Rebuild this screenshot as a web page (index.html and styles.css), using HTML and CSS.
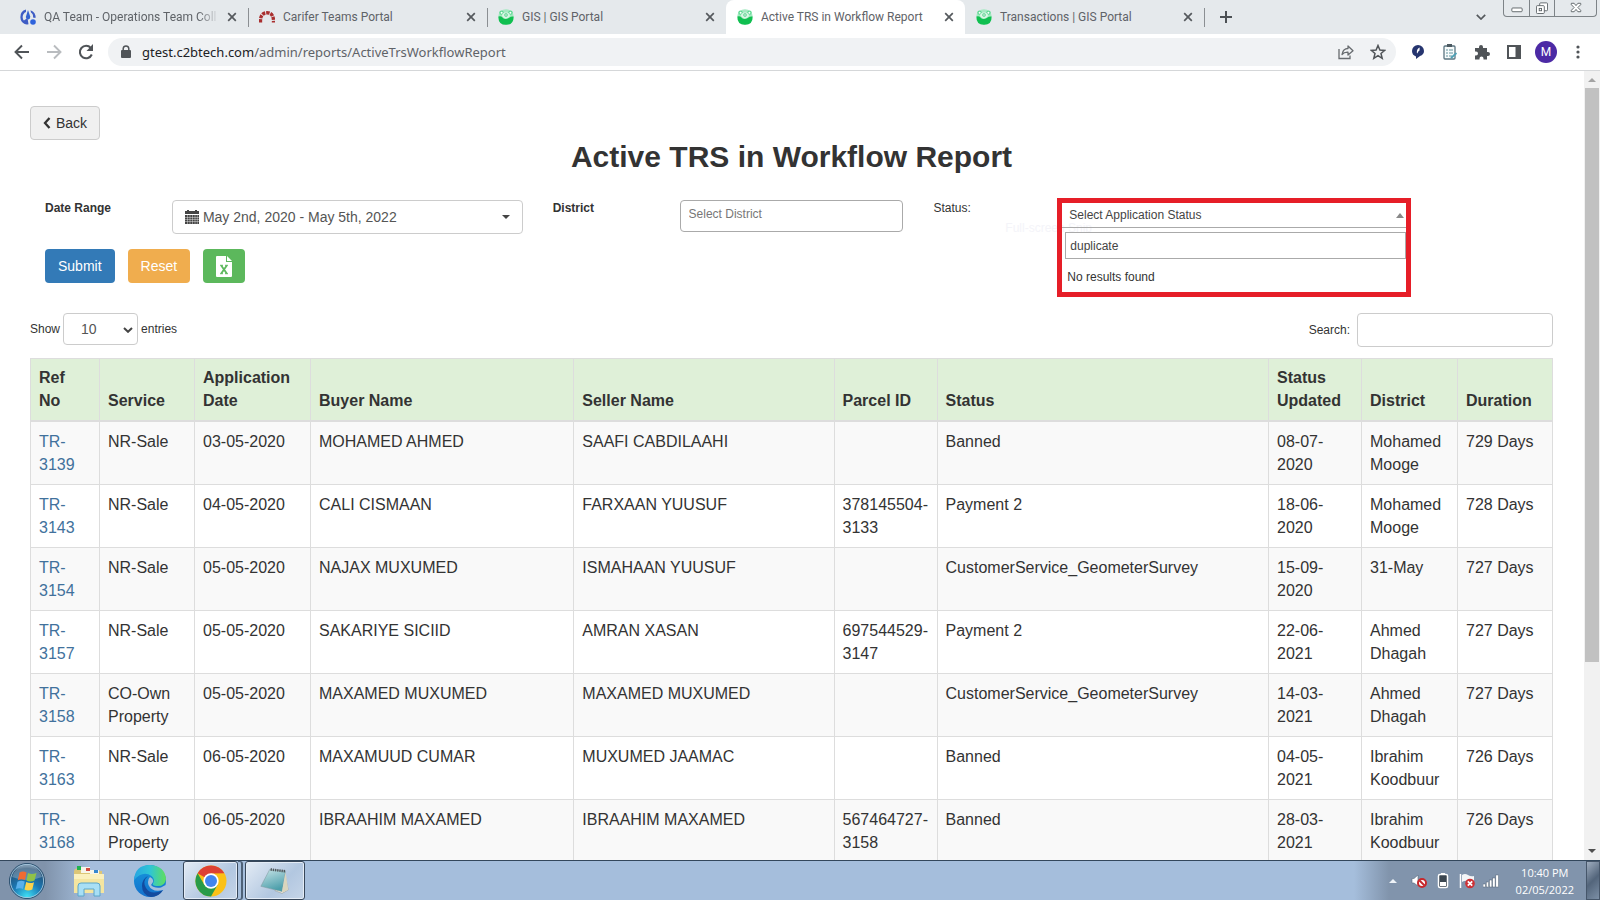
FILE: index.html
```html
<!DOCTYPE html>
<html lang="en">
<head>
<meta charset="utf-8">
<title>Active TRS in Workflow Report</title>
<link rel="stylesheet" href="styles.css">
</head>
<body>
<svg width="0" height="0" class="defs" aria-hidden="true">
  <defs>
    <symbol id="gis" viewBox="0 0 16 16">
      <circle cx="8" cy="8" r="7.800" fill="#a5e9c2"/>
      <circle cx="3.500" cy="3.600" r="2.200" fill="#5ed993"/><circle cx="12.500" cy="3.600" r="2.200" fill="#5ed993"/>
      <circle cx="3.600" cy="3.800" r="1" fill="#fff"/><circle cx="12.400" cy="3.800" r="1" fill="#fff"/>
      <path d="M4 7Q4 3.500 8 3.500T12 7Q10 9.500 8 9.500T4 7Z" fill="#d9f6e5"/>
      <circle cx="8" cy="6" r="1.700" fill="#46cd80"/><circle cx="8" cy="6" r=".8" fill="#fff"/>
      <path d="M.5 7.500Q3 6.800 4.500 8.500T8 10T11.500 8.500T15.500 7.500Q16 15.800 8 15.800T.5 7.500Z" fill="#10bf50"/>
    </symbol>
    <symbol id="x" viewBox="0 0 10 10"><path d="M1.200 1.200 8.800 8.800M8.800 1.200 1.200 8.800" stroke="#55595d" stroke-width="1.700"/></symbol>
  </defs>
</svg>

<header class="browser">
  <nav class="tabs" aria-label="Tabs">
    <div class="tab">
      <svg class="fav" viewBox="0 0 16 16"><path d="M6 .6A7.600 7.600 0 0 0 6.500 15.400L5.500 13A5.600 5.600 0 0 1 6 3Z" fill="#3e5cc4"/><path d="M2.500 12.500 7.500 9 8.500 15.300Q5 16 2.500 12.500Z" fill="#3e5cc4"/><path d="M8 1 5.800 8Q6 10.500 8.300 10.400Q10.600 10 10.200 7.500Z" fill="#3563d0"/><path d="M10.500 1.200Q16 3.500 15.500 9L13 8.500Q13.500 5 11 3.500Z" fill="#3e5cc4"/><circle cx="13" cy="13" r="2.800" fill="#2f63dc"/></svg>
      <span class="tab-title fade">QA Team - Operations Team Coll</span>
      <button class="close" aria-label="Close tab"><svg><use href="#x"/></svg></button>
    </div>
    <div class="tab line">
      <svg class="fav" viewBox="0 0 16 16"><path d="M1.500 13.500Q1 3.800 8 3.800Q15 3.800 14.500 13.500" fill="none" stroke="#a92f2f" stroke-width="3.400" stroke-dasharray="3.300 .9"/></svg>
      <span class="tab-title">Carifer Teams Portal</span>
      <button class="close" aria-label="Close tab"><svg><use href="#x"/></svg></button>
    </div>
    <div class="tab line">
      <svg class="fav"><use href="#gis"/></svg>
      <span class="tab-title">GIS | GIS Portal</span>
      <button class="close" aria-label="Close tab"><svg><use href="#x"/></svg></button>
    </div>
    <div class="tab active">
      <svg class="fav"><use href="#gis"/></svg>
      <span class="tab-title">Active TRS in Workflow Report</span>
      <button class="close" aria-label="Close tab"><svg><use href="#x"/></svg></button>
    </div>
    <div class="tab">
      <svg class="fav"><use href="#gis"/></svg>
      <span class="tab-title">Transactions | GIS Portal</span>
      <button class="close" aria-label="Close tab"><svg><use href="#x"/></svg></button>
    </div>
    <button class="new-tab line" aria-label="New tab"><svg viewBox="0 0 12 12"><path d="M6 0V12M0 6H12" stroke="#4c5054" stroke-width="2"/></svg></button>
    <button class="tab-search" aria-label="Search tabs"><svg viewBox="0 0 10 6"><path d="M.8.8 5 5 9.200.8" fill="none" stroke="#55595d" stroke-width="1.700"/></svg></button>
    <div class="window">
      <button aria-label="Minimise"><svg viewBox="0 0 12 16"><rect x=".5" y="8.500" width="11" height="4" rx="1" fill="#fff" stroke="#5d6468"/></svg></button>
      <button aria-label="Restore"><svg viewBox="0 0 13 16"><rect x="4" y="3" width="8.500" height="8.500" rx="1" fill="#fff" stroke="#5d6468"/><rect x=".5" y="6" width="8.500" height="8.500" rx="1" fill="#fff" stroke="#5d6468"/><rect x="3.500" y="9" width="2.500" height="2.500" fill="#fff" stroke="#5d6468"/></svg></button>
      <button class="wide" aria-label="Close"><svg viewBox="0 0 12 16"><path d="M1 3.500H4L6 6 8 3.500H11V5L8 8 11 11V12.500H8L6 10 4 12.500H1V11L4 8 1 5Z" fill="#fff" stroke="#5d6468"/></svg></button>
    </div>
  </nav>
  <div class="toolbar">
    <button class="ico" aria-label="Back"><svg viewBox="0 0 16 16"><path d="M15 8H2M8 1.500 1.500 8 8 14.500" fill="none" stroke="#505458" stroke-width="1.900"/></svg></button>
    <button class="ico" aria-label="Forward"><svg viewBox="0 0 16 16"><path d="M1 8H14M8 1.500 14.500 8 8 14.500" fill="none" stroke="#b9bcbf" stroke-width="1.900"/></svg></button>
    <button class="ico" aria-label="Reload"><svg viewBox="0 0 16 16"><path d="M13.800 10.500A6.200 6.200 0 1 1 12.800 4" fill="none" stroke="#505458" stroke-width="2"/><path d="M15 0V7H8.500Z" fill="#505458"/></svg></button>
    <div class="omnibox">
      <svg class="lock" viewBox="0 0 10 14"><rect x="0" y="5" width="10" height="8" rx="1" fill="#505458"/><path d="M2.200 6V3.500Q2.500 1 5 1T7.800 3.500V6" fill="none" stroke="#505458" stroke-width="1.500"/></svg>
      <a class="url" href="#top"><b>gtest.c2btech.com</b>/admin/reports/ActiveTrsWorkflowReport</a>
      <button class="ico" aria-label="Share"><svg viewBox="0 0 16 16"><path d="M1 5V14.500H12V11.500" fill="none" stroke="#676b6f" stroke-width="1.300"/><path d="M4 10.500Q5 4.500 10 4.500V2L15 6.800 10 11V8.200Q6 8 4 10.500Z" fill="none" stroke="#676b6f" stroke-width="1.300" stroke-linejoin="round"/></svg></button>
      <button class="ico" aria-label="Bookmark"><svg viewBox="0 0 16 16"><path d="M8 1.500 9.900 6 14.700 6.400 11 9.500 12.200 14.300 8 11.700 3.800 14.300 5 9.500 1.300 6.400 6.100 6Z" fill="none" stroke="#505458" stroke-width="1.500"/></svg></button>
    </div>
    <div class="extensions">
      <button class="ico" aria-label="Extension"><svg viewBox="0 0 16 16"><path d="M8 1A6 6 0 0 0 2 7Q2 11 6 12.500V15L10 12Q14 10.500 14 7A6 6 0 0 0 8 1Z" fill="#26356f"/><path d="M9.700 3.500Q6.800 4.500 6.800 8.500L7.300 9.500 8.300 7.500 9.500 6.500Z" fill="#fff"/></svg></button>
      <button class="ico" aria-label="Notes"><svg viewBox="0 0 16 16"><rect x="2" y="2" width="11" height="13" rx="1" fill="#f7fbfb" stroke="#5b7480" stroke-width="1.300"/><rect x="5" y="0" width="5" height="3" fill="#4c5a61"/><path d="M4 6H6M7 6H11M4 9H6M7 9H11M4 12H6M7 12H10" stroke="#62939f"/><path d="M9 14 14.500 9" stroke="#4fa0b5" stroke-width="1.800"/></svg></button>
      <button class="ico" aria-label="Extensions"><svg viewBox="0 0 16 16"><path d="M1 4H5V3A2 2 0 0 1 9 3V4H13V8H14A2 2 0 0 1 14 12H13V15.500H9.500V14.500A2 2 0 0 0 5.500 14.500V15.500H1V11.500H2A2 2 0 0 0 2 7.500H1Z" fill="#505458"/></svg></button>
      <button class="ico" aria-label="Side panel"><svg viewBox="0 0 16 16"><path d="M1 1H15V15H1ZM3 3V13H9.500V3Z" fill="#505458" fill-rule="evenodd"/></svg></button>
      <button class="avatar" aria-label="Profile">M</button>
      <button class="ico" aria-label="Menu"><svg viewBox="0 0 16 16"><g fill="#505458"><circle cx="8" cy="3" r="1.600"/><circle cx="8" cy="8" r="1.600"/><circle cx="8" cy="13" r="1.600"/></g></svg></button>
    </div>
  </div>
</header>

<div class="viewport" id="top">
  <main class="page">
    <button class="btn btn-back"><svg viewBox="0 0 8 12"><path d="M6.500 1 2 6 6.500 11" fill="none" stroke="#333" stroke-width="2.300"/></svg>Back</button>
    <h1>Active TRS in Workflow Report</h1>

    <form class="filters">
      <label class="strong" for="range">Date Range</label>
      <div class="span3">
        <button type="button" id="range" class="range"><svg class="cal" viewBox="0 0 14 14"><path d="M0 1H2V0H4V1H10V0H12V1H14V4H0Z" fill="#444"/><rect y="5" width="14" height="9" fill="#444"/><path d="M0 7.500H14M0 9.500H14M0 11.500H14M2.500 5V14M5 5V14M7.500 5V14M10 5V14M12.300 5V14" stroke="#fff" stroke-width=".4"/></svg><span>May 2nd, 2020 - May 5th, 2022</span><i class="caret"></i></button>
      </div>
      <label class="strong" for="district">District</label>
      <div class="span2"><input id="district" class="district" placeholder="Select District"></div>
      <label for="status">Status:</label>
      <div class="span3 status-cell">
        <div class="status">
          <button type="button" id="status" aria-expanded="true">Select Application Status<i class="caret up"></i></button>
          <input aria-label="Filter statuses" value="duplicate">
          <p>No results found</p>
        </div>
        <span class="ghost">Full-screen Snip</span>
      </div>
      <div class="actions">
        <button type="button" class="btn submit">Submit</button>
        <button type="button" class="btn reset">Reset</button>
        <button type="button" class="btn excel" aria-label="Export to Excel"><svg viewBox="0 0 16 21"><path d="M0 1Q0 0 1 0H10V6H16V20Q16 21 15 21H1Q0 21 0 20Z" fill="#fff"/><path d="M11 0 16 5H11Z" fill="#fff"/><path d="M5.200 9.500 10.800 17.500M10.800 9.500 5.200 17.500" stroke="#5cb85c" stroke-width="1.800"/><path d="M4 9.300H7M9 9.300H12M4 17.700H7M9 17.700H12" stroke="#5cb85c" stroke-width="1"/></svg></button>
      </div>
    </form>

    <div class="table-tools">
      <label class="length">Show
        <span class="pick"><select><option>10</option><option>25</option></select><svg viewBox="0 0 10 6"><path d="M1 1 5 4.800 9 1" fill="none" stroke="#444" stroke-width="2"/></svg></span>
        entries</label>
      <label class="search">Search: <input type="search"></label>
    </div>

    <table>
      <colgroup><col class="c-ref"><col class="c-service"><col class="c-date"><col class="c-buyer"><col class="c-seller"><col class="c-parcel"><col class="c-status"><col class="c-updated"><col class="c-district"><col class="c-duration"></colgroup>
      <thead><tr><th>Ref<br>No</th><th>Service</th><th>Application Date</th><th>Buyer Name</th><th>Seller Name</th><th>Parcel ID</th><th>Status</th><th>Status Updated</th><th>District</th><th>Duration</th></tr></thead>
      <tbody>
        <tr><td><a href="#3139">TR-3139</a></td><td>NR-Sale</td><td class="nw">03-05-2020</td><td>MOHAMED AHMED</td><td>SAAFI CABDILAAHI</td><td></td><td>Banned</td><td>08-07-2020</td><td>Mohamed Mooge</td><td>729 Days</td></tr>
        <tr><td><a href="#3143">TR-3143</a></td><td>NR-Sale</td><td class="nw">04-05-2020</td><td>CALI CISMAAN</td><td>FARXAAN YUUSUF</td><td>378145504-3133</td><td>Payment 2</td><td>18-06-2020</td><td>Mohamed Mooge</td><td>728 Days</td></tr>
        <tr><td><a href="#3154">TR-3154</a></td><td>NR-Sale</td><td class="nw">05-05-2020</td><td>NAJAX MUXUMED</td><td>ISMAHAAN YUUSUF</td><td></td><td>CustomerService_GeometerSurvey</td><td>15-09-2020</td><td>31-May</td><td>727 Days</td></tr>
        <tr><td><a href="#3157">TR-3157</a></td><td>NR-Sale</td><td class="nw">05-05-2020</td><td>SAKARIYE SICIID</td><td>AMRAN XASAN</td><td>697544529-3147</td><td>Payment 2</td><td>22-06-2021</td><td>Ahmed Dhagah</td><td>727 Days</td></tr>
        <tr><td><a href="#3158">TR-3158</a></td><td>CO-Own Property</td><td class="nw">05-05-2020</td><td>MAXAMED MUXUMED</td><td>MAXAMED MUXUMED</td><td></td><td>CustomerService_GeometerSurvey</td><td>14-03-2021</td><td>Ahmed Dhagah</td><td>727 Days</td></tr>
        <tr><td><a href="#3163">TR-3163</a></td><td>NR-Sale</td><td class="nw">06-05-2020</td><td>MAXAMUUD CUMAR</td><td>MUXUMED JAAMAC</td><td></td><td>Banned</td><td>04-05-2021</td><td>Ibrahim Koodbuur</td><td>726 Days</td></tr>
        <tr><td><a href="#3168">TR-3168</a></td><td>NR-Own Property</td><td class="nw">06-05-2020</td><td>IBRAAHIM MAXAMED</td><td>IBRAAHIM MAXAMED</td><td>567464727-3158</td><td>Banned</td><td>28-03-2021</td><td>Ibrahim Koodbuur</td><td>726 Days</td></tr>
      </tbody>
    </table>
  </main>
  <div class="scrollbar" aria-hidden="true">
    <i class="arrow top"></i><div class="track"><div class="thumb"></div></div><i class="arrow bottom"></i>
  </div>
</div>

<footer class="taskbar">
  <button class="start" aria-label="Start"><svg viewBox="0 0 38 38">
    <defs><radialGradient id="orb" cx=".5" cy=".95" r=".95"><stop offset="0" stop-color="#3fe0f5"/><stop offset=".45" stop-color="#1a78b4"/><stop offset=".85" stop-color="#265075"/><stop offset="1" stop-color="#7d9db7"/></radialGradient></defs>
    <circle cx="19" cy="19" r="17.500" fill="url(#orb)" stroke="#284d6c"/><circle cx="19" cy="19" r="16.600" fill="none" stroke="#a9cadf" stroke-width=".9"/>
    <path d="M4 15Q8 3 19 3T34 15Q19 21 4 15Z" fill="#fff" opacity=".25"/>
    <path d="M11.500 10.500Q15 8.500 18.500 10.500L17 18Q13.500 16.500 9.800 18.200Z" fill="#ee6b32"/>
    <path d="M20 11Q23.500 13 28.500 11L26.500 18.500Q22 20.500 18.500 18.500Z" fill="#8fc248"/>
    <path d="M9.500 19.700Q13 18 16.700 19.500L15 27Q12 25.500 7.800 27Z" fill="#59b0eb"/>
    <path d="M18.200 20Q22 22 26 20.200L24.300 27.500Q20 29.500 16.500 27.500Z" fill="#fbd24b"/></svg></button>
  <button class="pin" aria-label="File Explorer"><svg viewBox="0 0 34 32"><path d="M3 4 11 2 13 6H30V28H2V6Z" fill="#dcc677"/><rect x="5" y="1" width="4" height="4" fill="#1fb34e"/><path d="M9 2H18V8H9Z" fill="#f7f5e9"/><rect x="14" y="3" width="4" height="3" fill="#d24b3f"/><path d="M18 5H27V10H18Z" fill="#f7f5e9"/><rect x="22" y="5" width="4" height="3" fill="#3688cf"/><path d="M2 9H32V28H2Z" fill="#f4e5a0"/><path d="M2 9H32V14H2Z" fill="#faf0bd"/><path d="M6 31V21Q6 18 9 18H25Q28 18 28 21V31H22V24H12V31Z" fill="#a8dff5" stroke="#5aa6ca"/></svg></button>
  <button class="pin edge" aria-label="Edge"><svg viewBox="0 0 32 32">
    <defs><linearGradient id="eg" x1="0" x2="1"><stop offset="0" stop-color="#27a5e2"/><stop offset=".5" stop-color="#2fc5d5"/><stop offset="1" stop-color="#5fdf5c"/></linearGradient><linearGradient id="eb" x1="0" y1="0" x2="0" y2="1"><stop offset="0" stop-color="#1698dd"/><stop offset="1" stop-color="#1470cc"/></linearGradient></defs>
    <circle cx="16" cy="16" r="16" fill="url(#eb)"/>
    <path d="M0 15Q1 0 16 0Q31 1 32 14Q31 22 22 21Q17 20 19.500 17.500Q21 14 17.500 11Q9 5 0 15Z" fill="url(#eg)"/>
    <path d="M14 11Q8 16 12 23Q17 31 29 25Q25 32 17 32Q8 30 8 21Q8 14 14 11Z" fill="#134b9f"/>
    <path d="M17 20Q20 23.500 27 22.500L31.500 20 33 24 29.500 25Q18 28 14.500 20Q13 15 16 12Q20 14 19 17Z" fill="#a5bedc"/></svg></button>
  <div class="stack">
    <button class="task" aria-label="Chrome"><svg viewBox="0 0 32 32"><circle cx="16" cy="16" r="15.500" fill="#fbc116"/><path d="M16 16 2.600 8.200A15.500 15.500 0 0 1 29.400 8.200L16 8.500Z" fill="#dd4033"/><path d="M2.600 8.200A15.500 15.500 0 0 0 16 31.500L22.500 20 16 16 9.500 20Z" fill="#289b49"/><circle cx="16" cy="16" r="7.700" fill="#fff"/><circle cx="16" cy="16" r="6" fill="#4285ee"/></svg></button>
    <i></i>
  </div>
  <button class="task" aria-label="Notepad"><svg viewBox="0 0 34 32"><defs><linearGradient id="np" x1="0" y1="0" x2=".4" y2="1"><stop offset="0" stop-color="#c9e5e8"/><stop offset="1" stop-color="#4d9fab"/></linearGradient></defs><path d="M27 4 32 26 25 30 17 27Z" fill="#f3f1e4" stroke="#8c9291" stroke-width=".6"/><path d="M11 3 29 5 25 28 1 22Z" fill="url(#np)" stroke="#80999d" stroke-width=".6"/><path d="M12 3 29 5" stroke="#50575b" stroke-width="3" stroke-dasharray="1.500 1"/><path d="M29 6 32 26 26 29 25 28Z" fill="#dad5bd"/></svg></button>
  <div class="tray">
    <svg class="up-arrow" viewBox="0 0 8 4"><path d="M0 4 4 0 8 4Z" fill="#eef3f8"/></svg>
    <svg viewBox="0 0 16 16"><path d="M1 5.500H3L7 2V13L3 10H1Z" fill="#fff" stroke="#59697d" stroke-width=".6"/><circle cx="11" cy="10" r="4" fill="#fff" stroke="#c7282c" stroke-width="2"/><path d="M8.500 7.500 13.500 12.500" stroke="#c7282c" stroke-width="2"/></svg>
    <svg viewBox="0 0 16 16"><rect x="6" width="4" height="3" fill="#fff"/><rect x="3.500" y="1.500" width="9" height="13" rx="1.500" fill="#3b4650" stroke="#fff" stroke-width="1.500"/><path d="M5 9H11V13H5Z" fill="#fff"/></svg>
    <svg viewBox="0 0 16 16"><path d="M1.500 1V15" stroke="#fff" stroke-width="1.500"/><path d="M3 2Q6 0 9 2T15 3V8Q12 9 9 8T3 9Z" fill="#f4f6f8"/><circle cx="11" cy="10.500" r="4.800" fill="#cc3035"/><path d="M8.800 8.300 13.200 12.700M13.200 8.300 8.800 12.700" stroke="#fff" stroke-width="1.700"/></svg>
    <svg viewBox="0 0 16 16"><g fill="#fff" stroke="#536273" stroke-width=".5"><rect x="0" y="11" width="2.500" height="3"/><rect x="3.200" y="9" width="2.500" height="5"/><rect x="6.400" y="7" width="2.500" height="7"/><rect x="9.600" y="5" width="2.500" height="9"/><rect x="12.800" y="2" width="2.700" height="12"/></g></svg>
    <time>10:40 PM<br>02/05/2022</time>
    <button class="peek" aria-label="Show desktop"></button>
  </div>
</footer>
</body>
</html>
```
FILE: styles.css
```css
* { box-sizing: border-box; }

body {
  margin: 0;
  height: 100vh;
  display: flex;
  flex-direction: column;
  overflow: hidden;
  background: #fff;
  color: #333;
  font: 12px/17px "Liberation Sans", Arial, sans-serif;
}

button, input, select { font: inherit; color: inherit; }
button { cursor: pointer; padding: 0; border: 0; background: none; }
svg { display: block; flex: none; }
.defs { position: absolute; }

/* Browser frame */
.browser { flex: none; font-family: Roboto, sans-serif; color: #5f6368; }
.tabs { display: flex; height: 34px; padding-left: 9px; background: #e5e9ec; align-items: center; }
.tab { position: relative; display: flex; align-items: center; width: 239px; height: 34px; padding: 0 11px; gap: 8px; }
.tab.active { background: #fff; border-radius: 8px 8px 0 0; }
.line::before { content: ""; position: absolute; left: 0; top: 8px; height: 19px; border-left: 1px solid #8b8f93; }
.fav { width: 16px; height: 16px; }
.tab-title { flex: 1; min-width: 0; white-space: nowrap; }
.fade { -webkit-mask-image: linear-gradient(90deg, #000 88%, transparent); mask-image: linear-gradient(90deg, #000 88%, transparent); }
.close svg { width: 10px; height: 10px; }
.new-tab { position: relative; width: 44px; height: 34px; display: flex; align-items: center; justify-content: center; }
.new-tab svg { width: 12px; height: 12px; }
.tab-search { margin-left: auto; width: 44px; height: 34px; display: flex; align-items: center; justify-content: center; }
.tab-search svg { width: 10px; height: 6px; }
.window { display: flex; align-self: flex-start; height: 17px; margin-right: 3px; border: 1px solid #7d8387; border-top: 0; border-radius: 0 0 4px 4px; }
.window button { width: 25px; display: flex; justify-content: center; }
.window button + button { border-left: 1px solid #7d8387; }
.window .wide { width: 42px; }
.window svg { height: 15px; width: 12px; }

.toolbar { display: flex; align-items: center; height: 37px; padding: 0 6px; border-bottom: 1px solid #d5d7d9; background: #fff; }
.ico { width: 32px; height: 32px; flex: none; display: flex; align-items: center; justify-content: center; }
.ico svg { width: 16px; height: 16px; }
.omnibox { flex: 1; display: flex; align-items: center; height: 28px; margin-left: 6px; padding: 0 2px 0 13px; border-radius: 14px; background: #f0f2f4; }
.lock { width: 10px; height: 14px; margin-right: 11px; }
.url { flex: 1; color: #5f6368; font-family: "Noto Sans", sans-serif; font-size: 13px; text-decoration: none; }
.url b { font-weight: 400; color: #202124; }
.extensions { display: flex; align-items: center; padding-left: 6px; }
.avatar { width: 22px; height: 22px; margin: 0 5px; border-radius: 50%; background: #4c2aa5; color: #fff; font-size: 12px; line-height: 22px; }

/* Report page */
.viewport { flex: 1; min-height: 0; display: flex; }
.page { flex: 1; min-width: 0; overflow: hidden; padding: 35px 31px 0 30px; }
.btn { height: 34px; padding: 0 13px; border-radius: 4px; font-size: 14px; line-height: 34px; }
.btn-back { display: flex; align-items: center; gap: 5px; padding: 0 12px; border: 1px solid #ccc; background: #f0f0f0; }
.btn-back svg { width: 8px; height: 12px; }
h1 { margin: 0; text-align: center; font-size: 30px; line-height: 34px; }

.filters { display: grid; grid-template-columns: repeat(12, minmax(0, 1fr)); padding-top: 26px; }
.filters > label { padding: 0 15px; }
.strong { font-weight: 700; }
.filters > div { padding: 0 15px; }
.filters .span3 { grid-column: span 3; }
.filters .span2 { grid-column: span 2; }
.range { display: flex; align-items: center; width: 100%; height: 34px; padding: 0 12px; border: 1px solid #ccc; border-radius: 4px; font-size: 14px; color: #555; }
.cal { width: 14px; height: 14px; margin-right: 4px; }
.caret { margin-left: auto; border: solid transparent; border-width: 4px 4px 0; border-top-color: #444; }
.caret.up { border-width: 0 4px 5px; border-bottom-color: #888; }
.district { display: block; width: 100%; height: 32px; padding: 0 8px 4px; border: 1px solid #aaa; border-radius: 4px; }
.district::placeholder { color: #777; }
.filters .status-cell { position: relative; height: 49px; padding: 0 15px 0 12px; }
.status { position: relative; height: 99px; margin-top: -2px; border: 5px solid #e61e28; color: #444; }
.status button { display: flex; align-items: center; width: 100%; height: 25px; padding: 0 2px 0 7px; border-bottom: 1px solid #aaa; }
.status input { display: block; width: calc(100% - 3px); height: 27px; margin: 4px 0 0 3px; padding: 0 4px; border: 1px solid #aaa; }
.status p { margin: 10px 5px; color: #333; }
.ghost { position: absolute; left: -40px; top: 20px; color: #f4f4f9; white-space: nowrap; z-index: -1; }
.filters .actions { grid-column: 1 / -1; display: flex; gap: 13px; }
.actions .btn { color: #fff; }
.submit { background: #337ab7; }
.reset { background: #f0ad4e; }
.excel { background: #5cb85c; }
.excel svg { width: 16px; height: 21px; }

.table-tools { display: flex; justify-content: space-between; align-items: flex-start; padding-top: 30px; height: 75px; }
.table-tools label { display: flex; align-items: center; gap: 3px; }
.pick { position: relative; }
.pick select { appearance: none; width: 75px; height: 32px; padding: 0 17px; border: 1px solid #ccc; border-radius: 4px; background: #fff; font-size: 14px; color: #555; }
.pick svg { position: absolute; right: 5px; top: 14px; width: 10px; height: 6px; }
.search input { width: 196px; height: 34px; margin-left: 4px; border: 1px solid #ccc; border-radius: 4px; }

table { width: 100%; table-layout: fixed; border-collapse: collapse; font-size: 16px; line-height: 23px; }
th, td { padding: 8px; border: 1px solid #ddd; text-align: left; vertical-align: top; }
th { padding-top: 7px; vertical-align: bottom; border-bottom-width: 2px; background: #dff0d8; }
tbody tr:nth-child(odd) { background: #f9f9f9; }
td a { color: #41719c; text-decoration: none; }
.nw { white-space: nowrap; }
.c-ref { width: 69px; }
.c-service { width: 95px; }
.c-date { width: 116px; }
.c-buyer { width: 17.3%; }
.c-seller { width: 17.1%; }
.c-parcel { width: 103px; }
.c-updated { width: 93px; }
.c-district { width: 96px; }
.c-duration { width: 95px; }

.scrollbar { flex: none; display: flex; flex-direction: column; width: 16px; background: #f1f1f1; }
.track { flex: 1; padding: 0 1px; }
.thumb { height: 76%; background: #c1c1c1; }
.arrow { height: 5px; margin: 6px 4px; border: solid transparent; border-width: 0 4px 4px; border-bottom-color: #a3a3a3; }
.arrow.bottom { border-width: 4px 4px 0; border-top-color: #505050; }

/* Taskbar */
.taskbar { flex: none; display: flex; align-items: center; height: 40px; border-top: 1px solid #33475c; background: linear-gradient(90deg, #8093ab 45px, #a5bedc 90px); font-family: "Open Sans", sans-serif; }
.start { margin-left: 8px; }
.start svg { width: 38px; height: 38px; }
.pin { margin-left: 26px; }
.pin svg { width: 34px; height: 32px; }
.edge { margin-left: 28px; }
.edge svg { width: 32px; }
.stack { display: flex; margin: 0 2px 0 17px; }
.stack i { width: 5px; height: 39px; border: solid #4e6177; border-width: 1px 2px 1px 0; border-radius: 0 3px 3px 0; }
.task { display: flex; align-items: center; justify-content: center; width: 55px; height: 39px; border: 1px solid #37475a; border-radius: 3px; background: linear-gradient(135deg, #e3ebf5, #b2c7e0 60%, #c5d5e8); box-shadow: inset 0 0 0 1px #e4ecf6; }
.task svg { width: 32px; height: 32px; }
.stack + .task { width: 60px; }
.stack + .task svg { width: 30px; height: 30px; }
.tray { display: flex; align-items: center; height: 39px; margin-left: auto; padding-left: 35px; gap: 8px; background: linear-gradient(90deg, #a5bedc, #8194ac 35px); color: #fff; }
.tray svg { width: 16px; height: 16px; }
.tray .up-arrow { width: 8px; height: 4px; margin-right: 6px; }
time { padding: 0 4px 0 9px; text-align: center; font-size: 11px; line-height: 17px; }
.peek { width: 14px; height: 39px; border: 1px solid #46566a; background: linear-gradient(135deg, #9fadbf, #53657b 50%, #7c8fa6); }
```
